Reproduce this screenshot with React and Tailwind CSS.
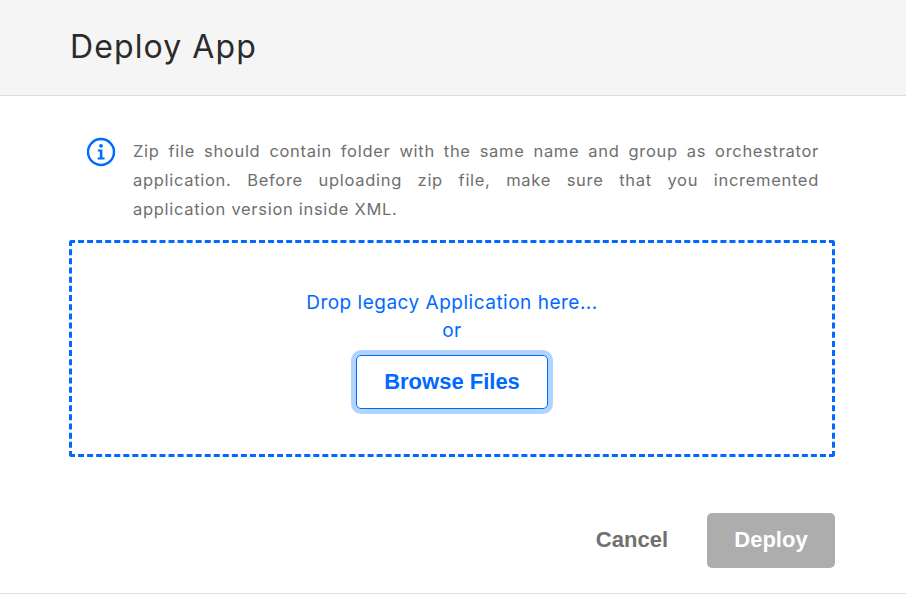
import { useState } from "react";

const bodyFont = "font-['Inter','Noto_Sans',sans-serif]";
const buttonFont = "font-['Liberation_Sans',Arial,sans-serif]";

function InfoIcon() {
  return (
    <svg width="30" height="30" viewBox="0 0 30 30" fill="none" className="shrink-0">
      <circle cx="15" cy="15" r="13" stroke="#0069ff" strokeWidth="2.4" />
      <circle cx="15" cy="8.8" r="1.9" fill="#0069ff" />
      <path d="M11.8 12.4h4.6v8.2h2.2v2h-7v-2h2.2v-6.2h-2z" fill="#0069ff" />
    </svg>
  );
}

export default function App() {
  const [fileName] = useState(null);

  return (
    <div className={`flex h-[594px] w-full flex-col bg-white ${bodyFont}`}>
      <div className="flex h-[96px] shrink-0 items-center border-b border-[#dedede] bg-[#f5f5f5] pl-[70px] pb-[2px]">
        <h1 className="text-[32px] font-normal tracking-[1.1px] text-[#2b2b2b]">Deploy App</h1>
      </div>

      <div className="flex flex-1 flex-col border-b border-[#dedede] pl-[69px] pr-[71px] pt-[41px]">
        <div className="flex gap-[17px] pl-[17px] pr-[16px]">
          <InfoIcon />
          <p className="text-justify text-[16.5px] leading-[29px] tracking-[0.7px] text-[#6f6f6f]">
            Zip file should contain folder with the same name and group as orchestrator application. Before uploading zip file, make sure that you incremented application version inside XML.
          </p>
        </div>

        <div className="mt-[16px] flex h-[217px] flex-col items-center rounded-[3px] border-[3px] border-dashed border-[#0069ff] pt-[46px]">
          <p className="text-[19px] leading-[28px] tracking-[0.5px] text-[#0069ff]">Drop legacy Application here...</p>
          <p className="text-[19px] leading-[28px] tracking-[0.5px] text-[#0069ff]">or</p>
          <button className={`mt-[10px] h-[54px] w-[192px] rounded-[5px] border border-[#0069ff] bg-white pb-[1px] text-[22px] font-bold text-[#0069ff] shadow-[0_0_0_5px_#b0d3ff] ${buttonFont}`}>
            {fileName || "Browse Files"}
          </button>
        </div>

        <div className="mt-[56px] flex items-center justify-end gap-[39px]">
          <button className={`pb-[3px] text-[22px] font-bold text-[#707070] ${buttonFont}`}>Cancel</button>
          <button disabled className={`h-[55px] w-[128px] rounded-[5px] bg-[#adadad] pb-[3px] text-[22px] font-bold text-white ${buttonFont}`}>
            Deploy
          </button>
        </div>
      </div>
    </div>
  );
}
